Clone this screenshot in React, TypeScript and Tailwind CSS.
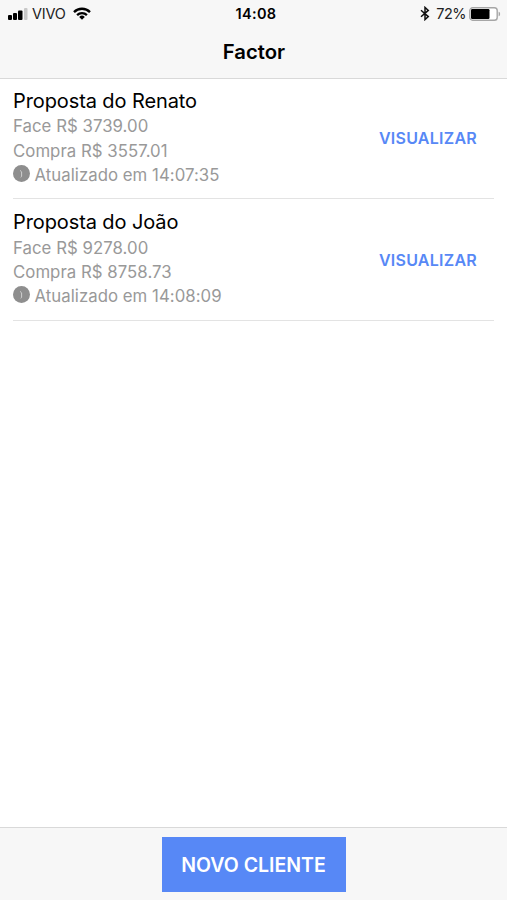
type Proposal = {
  name: string
  face: string
  purchase: string
  updatedAt: string
}

const proposals: Proposal[] = [
  { name: 'Renato', face: '3739.00', purchase: '3557.01', updatedAt: '14:07:35' },
  { name: 'João', face: '9278.00', purchase: '8758.73', updatedAt: '14:08:09' },
]

function SignalBars() {
  return (
    <svg width="20" height="12" viewBox="0 0 20 12" fill="#000">
      <rect x="0" y="7" width="4" height="5" rx="1" />
      <rect x="5" y="5" width="4" height="7" rx="1" />
      <rect x="10" y="2.5" width="4.5" height="9.5" rx="1" />
      <rect x="16" y="0" width="3.5" height="12" rx="1" fill="#c8c8c8" />
    </svg>
  )
}

function WifiIcon() {
  return (
    <svg width="18" height="13" viewBox="0 0 18 13" fill="none" stroke="#000" strokeWidth="2.3">
      <path d="M1 5.1a11.2 11.2 0 0 1 16 0" />
      <path d="M4.1 8.1a7 7 0 0 1 9.8 0" />
      <path d="M9 12.7 6.2 9.9a4 4 0 0 1 5.6 0Z" fill="#000" stroke="none" />
    </svg>
  )
}

function BluetoothIcon() {
  return (
    <svg width="10" height="15" viewBox="0 0 10 15" fill="none" stroke="#111" strokeWidth="1.5">
      <path d="M1 4.2 8.3 10.6 5 13.6V1.4l3.3 3L1 10.8" />
    </svg>
  )
}

function BatteryIcon() {
  return (
    <svg width="32" height="14" viewBox="0 0 32 14">
      <rect x="0.8" y="0.8" width="27.4" height="12.4" rx="2.8" fill="#fff" stroke="#a6a6a6" strokeWidth="1.4" />
      <rect x="2" y="2" width="18.5" height="10" rx="1.2" fill="#000" />
      <path d="M29.6 4.8c1.1.3 1.5 1.1 1.5 2.2s-.4 1.9-1.5 2.2Z" fill="#a6a6a6" />
    </svg>
  )
}

function ClockIcon() {
  return (
    <svg width="17" height="17" viewBox="0 0 17 17" fill="none">
      <circle cx="8.5" cy="8.5" r="8.5" fill="#8e8e8e" />
      <path d="M7 5.4 8.6 6.8v4.4l-.8 1.2" stroke="#d0d0d0" strokeWidth="1" />
    </svg>
  )
}

function ProposalItem({ proposal }: { proposal: Proposal }) {
  return (
    <li className="mx-[13px] flex h-[121.5px] items-center justify-between border-b border-[#e3e3e3] pr-[17px]">
      <div className="pb-px text-[16.8px] leading-[24.4px] tracking-[0.03px] text-[#999]">
        <h2 className="text-[20px] leading-[26.6px] tracking-[-0.1px] text-black">Proposta do {proposal.name}</h2>
        <p>Face R$ {proposal.face}</p>
        <p>Compra R$ {proposal.purchase}</p>
        <p className="flex items-center gap-[4.5px]">
          <span className="-mt-[4px]">
            <ClockIcon />
          </span>
          Atualizado em {proposal.updatedAt}
        </p>
      </div>
      <button className="pt-px text-[16px] font-semibold tracking-[0.25px] text-[#5788f6]">VISUALIZAR</button>
    </li>
  )
}

export default function App() {
  return (
    <div className="flex h-[900px] w-full flex-col overflow-hidden bg-white font-['Inter','Liberation_Sans',sans-serif] whitespace-nowrap">
      <header className="h-[79px] shrink-0 border-b border-[#d9d9d9] bg-[#f7f7f7]">
        <div className="grid h-[27px] grid-cols-[1fr_auto_1fr] items-center pr-[6px] pl-2 text-[14.5px] text-[#222]">
          <div className="flex items-center">
            <SignalBars />
            <span className="ml-1 tracking-[-0.2px]">VIVO</span>
            <span className="ml-[7px]">
              <WifiIcon />
            </span>
          </div>
          <span className="pl-[3px] font-semibold tracking-[0.3px] text-black">14:08</span>
          <div className="flex items-center justify-end">
            <BluetoothIcon />
            <span className="ml-[6px] tracking-[-0.5px]">72%</span>
            <span className="ml-[3px]">
              <BatteryIcon />
            </span>
          </div>
        </div>
        <h1 className="pl-px text-center text-[20.3px] leading-[50px] font-semibold text-black">Factor</h1>
      </header>

      <main className="flex-1">
        <ul className="-mt-[1.3px]">
          {proposals.map((proposal) => (
            <ProposalItem key={proposal.name} proposal={proposal} />
          ))}
        </ul>
      </main>

      <footer className="flex h-[73px] shrink-0 justify-center border-t border-[#d9d9d9] bg-[#f7f7f7] pt-[9px]">
        <button className="h-[55px] w-[184px] bg-[#5788f6] pt-[2px] text-[19.5px] font-semibold text-white">
          NOVO CLIENTE
        </button>
      </footer>
    </div>
  )
}
